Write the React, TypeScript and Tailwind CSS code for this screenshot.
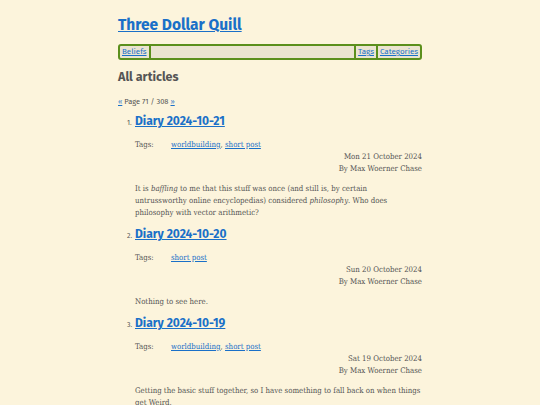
import React from "react";

const head = { fontFamily: '"Fira Sans", Roboto, "Noto Sans", sans-serif' };
const body = { fontFamily: '"Roboto Slab", "DejaVu Serif Condensed", "DejaVu Serif", serif' };

type Article = {
  n: number;
  title: string;
  tags: string[];
  date: string;
  content: React.ReactNode;
};

const articles: Article[] = [
  {
    n: 1,
    title: "Diary 2024-10-21",
    tags: ["worldbuilding", "short post"],
    date: "Mon 21 October 2024",
    content: (
      <>
        It is <em>baffling</em> to me that this stuff was once (and still is, by certain
        <br />
        untrussworthy online encyclopedias) considered <em>philosophy</em>. Who does
        <br />
        philosophy with vector arithmetic?
      </>
    ),
  },
  {
    n: 2,
    title: "Diary 2024-10-20",
    tags: ["short post"],
    date: "Sun 20 October 2024",
    content: <>Nothing to see here.</>,
  },
  {
    n: 3,
    title: "Diary 2024-10-19",
    tags: ["worldbuilding", "short post"],
    date: "Sat 19 October 2024",
    content: (
      <>
        Getting the basic stuff together, so I have something to fall back on when things
        get Weird.
      </>
    ),
  },
];

export default function App() {
  return (
    <div className="min-h-[405px] w-full bg-[#fcf4dc] text-[#555]" style={body}>
      <div className="mx-auto w-[304px] pt-[14px]">
        <h1 className="text-[15.5px] font-bold leading-[22px]" style={head}>
          <a href="#" className="text-[#1a70c8] underline">Three Dollar Quill</a>
        </h1>
        <nav
          className="mt-[8px] flex h-[16px] items-center rounded-[3px] border-2 border-[#5b8f1c] bg-[#ebe4d0] text-[8px]"
          style={head}
        >
          <a href="#" className="flex h-full items-center border-r-2 border-[#5b8f1c] px-[2px] text-[#1a70c8] underline">Beliefs</a>
          <div className="flex-1" />
          <a href="#" className="flex h-full items-center border-l-2 border-[#5b8f1c] px-[2px] text-[#1a70c8] underline">Tags</a>
          <a href="#" className="flex h-full items-center border-l-2 border-[#5b8f1c] px-[2px] text-[#1a70c8] underline">Categories</a>
        </nav>
        <h2 className="mt-[8px] text-[12.5px] font-bold leading-[18px] text-[#555]" style={head}>All articles</h2>
        <p className="mt-[10px] text-[7.5px] leading-[12px]" style={head}>
          <a href="#" className="text-[#1a70c8] underline">«</a> Page 71 / 308{" "}
          <a href="#" className="text-[#1a70c8] underline">»</a>
        </p>
        <ol className="mt-[3px] pl-[17px]">
          {articles.map((a) => (
            <li key={a.n} className="mb-[5px]">
              <div className="flex items-baseline">
                <span className="-ml-[8px] w-[8px] text-[7px]" style={head}>{a.n}.</span>
                <a href="#" className="text-[12px] font-bold leading-[20px] text-[#1a70c8] underline" style={head}>{a.title}</a>
              </div>
              <div className="mt-[8px] flex text-[7.8px] leading-[12px]">
                <span className="w-[36px]">Tags:</span>
                <span>
                  {a.tags.map((t, i) => (
                    <React.Fragment key={t}>
                      {i > 0 && ", "}
                      <a href="#" className="text-[#1a70c8] underline">{t}</a>
                    </React.Fragment>
                  ))}
                </span>
              </div>
              <div className="text-right text-[7.8px] leading-[12px]">
                <div>{a.date}</div>
                <div>By Max Woerner Chase</div>
              </div>
              <p className="mt-[8px] text-[7.8px] leading-[12px]">{a.content}</p>
            </li>
          ))}
        </ol>
      </div>
    </div>
  );
}
